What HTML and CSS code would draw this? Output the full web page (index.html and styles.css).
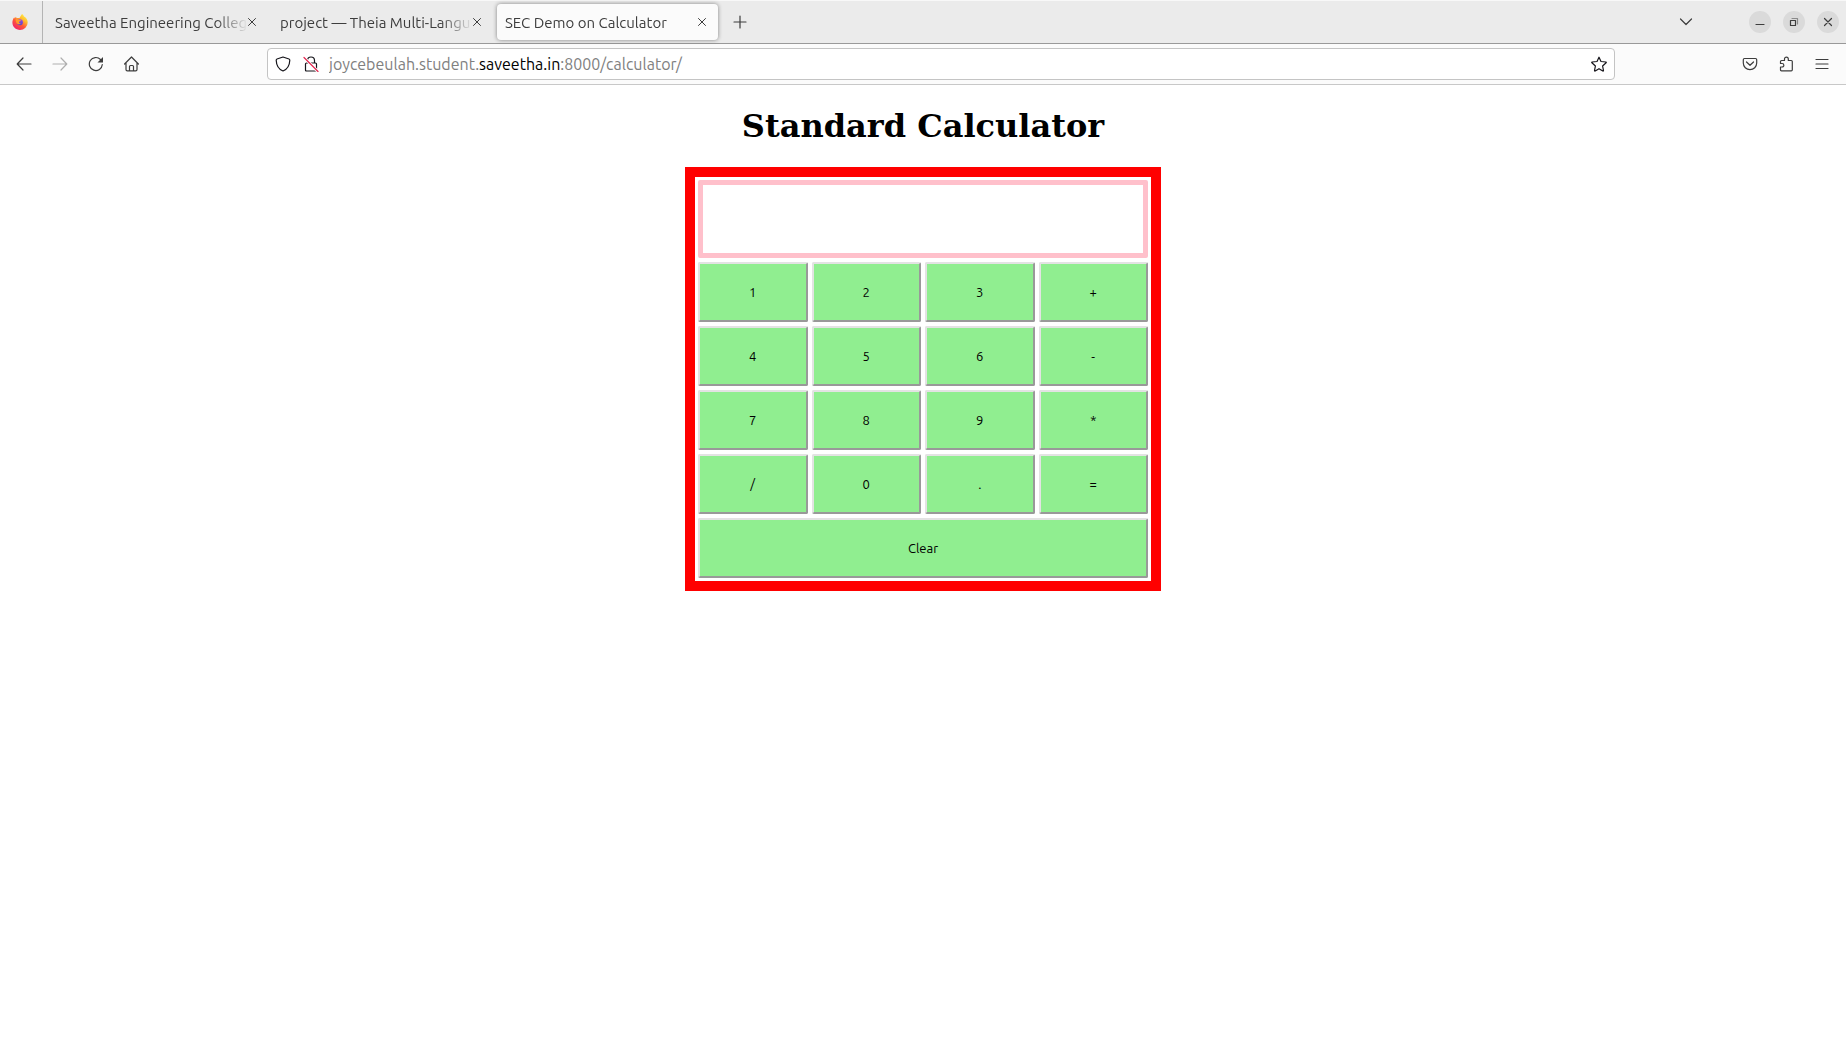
FILE: index.html
```html
<!DOCTYPE html>
<html lang="en">
<head>
<meta charset="utf-8">
<meta name="viewport" content="width=device-width, initial-scale=1">
<title>SEC Demo on Calculator</title>
<link rel="stylesheet" href="styles.css">
</head>
<body>
<header class="browser">
  <div class="tabbar">
    <button class="pinned" aria-label="Firefox View">
      <svg class="logo" viewBox="0 0 16 16">
        <defs>
          <linearGradient id="flame" x1="0.85" y1="0.05" x2="0.2" y2="0.95">
            <stop offset="0" stop-color="#fff04a"/><stop offset="0.3" stop-color="#ffbd2e"/><stop offset="0.6" stop-color="#ff5a36"/><stop offset="1" stop-color="#f0206e"/>
          </linearGradient>
          <linearGradient id="globe" x1="0.5" y1="0" x2="0.5" y2="1">
            <stop offset="0" stop-color="#a04de0"/><stop offset="1" stop-color="#5746c8"/>
          </linearGradient>
        </defs>
        <path fill="url(#flame)" d="M10 0c1 .6 1.700 1.600 2 2.500C14.300 3.500 15.800 6 15.700 8.600A7.700 7.400 0 0 1 8 16C3.700 16 .4 12.700.4 8.600c0-2.200.8-4 1.900-5.400l.3 1.200L4 2.700l.6 1.600c1-.4 2-.4 2.900-.2C8.200 2.700 9 1.500 10 0z"/>
        <circle cx="7.900" cy="8.200" r="3" fill="url(#globe)"/>
        <path fill="#ff9a2b" d="M3.500 5.300c1.600-.6 2.900-.2 3.600.7l1.900.2c-.2 1-1.300 1.300-2 1.500-.3 1 .5 1.800 1.900 1.500-1 1.700-3.800 1.500-4.600-.7-.4-1-.8-2-.8-3.200z"/>
      </svg>
    </button>
    <nav class="tabs" aria-label="Tabs">
      <div class="tab"><a href="#" class="tab-title">Saveetha Engineering Colleg</a><button class="close" aria-label="Close tab"><svg class="x" viewBox="0 0 8 8"><path d="M.5.5l7 7M7.500.5l-7 7"/></svg></button></div>
      <div class="tab"><a href="#" class="tab-title">project — Theia Multi-Langu</a><button class="close" aria-label="Close tab"><svg class="x" viewBox="0 0 8 8"><path d="M.5.5l7 7M7.500.5l-7 7"/></svg></button></div>
      <div class="tab active"><a href="#" class="tab-title">SEC Demo on Calculator</a><button class="close" aria-label="Close tab"><svg class="x" viewBox="0 0 8 8"><path d="M.5.5l7 7M7.500.5l-7 7"/></svg></button></div>
    </nav>
    <button class="tool" aria-label="New tab"><svg class="icon" viewBox="0 0 16 16"><path d="M8 2v12M2 8h12"/></svg></button>
    <button class="tool list-tabs" aria-label="List all tabs"><svg class="icon" viewBox="0 0 16 16"><path d="M2.500 5L8 10.500 13.500 5"/></svg></button>
    <div class="window-controls">
      <button class="round" aria-label="Minimize"><svg class="icon" viewBox="0 0 16 16"><path d="M4 10.500h8"/></svg></button>
      <button class="round" aria-label="Restore"><svg class="icon" viewBox="0 0 16 16"><path d="M4.500 6.500h5v5h-5z"/><path class="faint" d="M6 4.500h5.500V10"/></svg></button>
      <button class="round" aria-label="Close"><svg class="icon" viewBox="0 0 16 16"><path d="M4.500 4.500l7 7M11.500 4.500l-7 7"/></svg></button>
    </div>
  </div>
  <div class="toolbar">
    <button class="tool" aria-label="Back"><svg class="icon" viewBox="0 0 16 16"><path d="M15 8H1.500M7 2L1.200 8 7 14"/></svg></button>
    <button class="tool" aria-label="Forward" disabled><svg class="icon" viewBox="0 0 16 16"><path d="M1 8h13.500M9 2l5.800 6L9 14"/></svg></button>
    <button class="tool" aria-label="Reload"><svg class="icon" viewBox="0 0 16 16"><path d="M14.300 8.500A6.500 6.500 0 1 1 12.500 3.500"/><path class="solid" d="M15 1v5.500H9.500z"/></svg></button>
    <button class="tool" aria-label="Home"><svg class="icon" viewBox="0 0 16 16"><path d="M.6 8L7.500 1l6.900 7M2 6.800v6.700q0 1.300 1.300 1.300h8.400q1.300 0 1.300-1.300V6.800M5.500 14.500v-4q0-1 1-1h2q1 0 1 1v4"/></svg></button>
    <div class="urlbar">
      <svg class="icon dark" viewBox="0 0 16 16"><path d="M8 1L14 3q.8.300.8 1.200C14.600 9.500 12 13.300 8 15 4 13.300 1.400 9.500 1.200 4.200Q1.200 3.300 2 3z"/></svg>
      <svg class="icon dark lock" viewBox="0 0 16 16"><path d="M4.500 7V4.500a3.500 3.500 0 0 1 7 0V7M3.500 7h9q1 0 1 1v6q0 1-1 1h-9q-1 0-1-1V8q0-1 1-1z"/><path class="halo" d="M1 1.500l14 14"/><path class="slash" d="M1 1.500l14 14"/></svg>
      <a href="#" class="address">joycebeulah.student.<span class="domain">saveetha.in</span>:8000/calculator/</a>
      <button class="star" aria-label="Bookmark this page"><svg class="icon dark" viewBox="0 0 16 16"><path d="M8 1.200l2 4.300 4.900.5q.7.200.2.800L11.600 10l.9 4.600q0 .7-.7.400L8 12.700 4.200 15q-.7.300-.7-.4L4.400 10 .9 6.800Q.4 6.200 1.100 6L6 5.500z"/></svg></button>
    </div>
    <button class="tool" aria-label="Save to Pocket"><svg class="icon" viewBox="0 0 16 16"><path d="M2.500 2.500h11q1.200 0 1.200 1.200V7a6.700 6.700 0 0 1-13.400 0V3.700q0-1.200 1.200-1.200zM4.500 6L8 9.300 11.500 6"/></svg></button>
    <button class="tool" aria-label="Extensions"><svg class="icon" viewBox="0 0 16 16"><path d="M2.500 7.500V5.500q0-1 1-1H6.500V3a1.900 1.900 0 0 1 3.800 0v1.500h3q1 0 1 1v8.300q0 1-1 1H3.500q-1 0-1-1v-2.800h1.600a1.750 1.750 0 0 0 0-3.500z"/></svg></button>
    <button class="tool" aria-label="Menu"><svg class="icon" viewBox="0 0 16 16"><path d="M2 3.500h12M2 8h12M2 12.500h12"/></svg></button>
  </div>
</header>
<main class="page">
  <h1 class="title">Standard Calculator</h1>
  <form class="calculator">
    <input class="display" type="text" aria-label="Result">
    <button class="key" type="button">1</button>
    <button class="key" type="button">2</button>
    <button class="key" type="button">3</button>
    <button class="key" type="button">+</button>
    <button class="key" type="button">4</button>
    <button class="key" type="button">5</button>
    <button class="key" type="button">6</button>
    <button class="key" type="button">-</button>
    <button class="key" type="button">7</button>
    <button class="key" type="button">8</button>
    <button class="key" type="button">9</button>
    <button class="key" type="button">*</button>
    <button class="key" type="button">/</button>
    <button class="key" type="button">0</button>
    <button class="key" type="button">.</button>
    <button class="key" type="button">=</button>
    <button class="key clear" type="reset">Clear</button>
  </form>
</main>
</body>
</html>
```
FILE: styles.css
```css
* {
  box-sizing: border-box;
}

body {
  margin: 0;
  background: #fff;
  font-family: Ubuntu, "Noto Sans", sans-serif;
}

button {
  margin: 0;
  padding: 0;
  border: 0;
  background: none;
  color: inherit;
  font: inherit;
}

/* Icons */
.icon,
.x {
  display: block;
  flex: none;
  width: 16px;
  height: 16px;
  fill: none;
  stroke: #3d3d3d;
  stroke-width: 1.2;
  stroke-linecap: round;
  stroke-linejoin: round;
}

.x {
  width: 8px;
  height: 8px;
  stroke-width: 1;
}

.logo {
  display: block;
  width: 16px;
  height: 16px;
}

.dark {
  stroke: #15141a;
}

.solid {
  fill: #3d3d3d;
  stroke: none;
}

.faint {
  stroke: #8a8a8a;
}

.halo {
  stroke: #fff;
  stroke-width: 3;
}

.slash {
  stroke: #e22850;
}

/* Tab strip */
.tabbar {
  display: flex;
  align-items: center;
  height: 44px;
  padding-right: 7px;
  border-top: 1px solid #f8f8f8;
  border-bottom: 1px solid #999;
  background: #ebebeb;
  color: #3d3d3d;
}

.pinned {
  display: flex;
  align-items: center;
  align-self: stretch;
  justify-content: center;
  width: 43px;
  padding-right: 2px;
  border-right: 1px solid #b4b4b4;
}

.tabs {
  display: flex;
  align-self: stretch;
}

.tab {
  display: flex;
  align-items: center;
  width: 225px;
  padding: 0 12px;
}

.tab.active {
  width: 221px;
  height: 36px;
  margin: 3px 0 0 4px;
  padding: 0 12px 0 8px;
  border-radius: 4px;
  background: #fbfbfb;
  box-shadow: 0 0 4px rgba(0, 0, 0, 0.45);
}

.tab-title {
  flex: 1;
  min-width: 0;
  padding-top: 2px;
  overflow: hidden;
  color: inherit;
  font-size: 15px;
  line-height: 22px;
  text-decoration: none;
  white-space: nowrap;
  -webkit-mask-image: linear-gradient(to left, transparent, #000 32px);
  mask-image: linear-gradient(to left, transparent, #000 32px);
}

.close {
  display: flex;
  align-items: center;
  justify-content: center;
  width: 8px;
  height: 20px;
}

.tool {
  display: flex;
  align-items: center;
  justify-content: center;
  flex: none;
  width: 36px;
  height: 36px;
}

.tool:disabled {
  opacity: 0.4;
}

.tabs + .tool {
  margin-left: 4px;
}

.list-tabs {
  margin-left: auto;
}

.window-controls {
  display: flex;
  gap: 12px;
  margin-left: 45px;
}

.round {
  display: flex;
  align-items: center;
  justify-content: center;
  width: 22px;
  height: 22px;
  border-radius: 50%;
  background: #dadada;
}

/* Navigation bar */
.toolbar {
  display: flex;
  align-items: center;
  height: 41px;
  padding: 0 6px;
  border-bottom: 1px solid #c8c8c8;
  background: #fbfbfb;
}

.urlbar {
  display: flex;
  align-items: center;
  flex: 1;
  min-width: 0;
  height: 32px;
  margin: 0 117px;
  padding: 0 7px;
  border: 1px solid #c4c4c4;
  border-radius: 4px;
  background: #fff;
}

.lock {
  margin: 0 10px 0 12px;
}

.address {
  flex: 1;
  min-width: 0;
  overflow: hidden;
  color: #808080;
  font-size: 16px;
  line-height: 22px;
  text-decoration: none;
  white-space: nowrap;
}

.domain {
  color: #000;
}

/* Calculator */
.page {
  display: flex;
  flex-direction: column;
  align-items: center;
  padding: 0 8px;
}

.title {
  margin: 23px 0 22px;
  color: #000;
  font-family: "DejaVu Serif", serif;
  font-size: 32px;
  font-weight: bold;
  line-height: 37px;
}

.calculator {
  display: grid;
  grid-template-columns: repeat(4, 1fr);
  gap: 4px;
  width: 476px;
  max-width: 100%;
  padding: 3px;
  border: 10px solid #f00;
}

.display {
  grid-column: 1 / -1;
  min-width: 0;
  height: 78px;
  padding: 0 8px;
  border: 5px solid pink;
  border-radius: 2px;
  background: #fff;
  font: 20px "Noto Sans", sans-serif;
}

.key {
  height: 60px;
  border: 2px solid;
  border-color: #e3e3e3 #999 #999 #e3e3e3;
  border-radius: 2px;
  background: lightgreen;
  color: #000;
  font-size: 13px;
  line-height: 16px;
}

.clear {
  grid-column: 1 / -1;
}
```
